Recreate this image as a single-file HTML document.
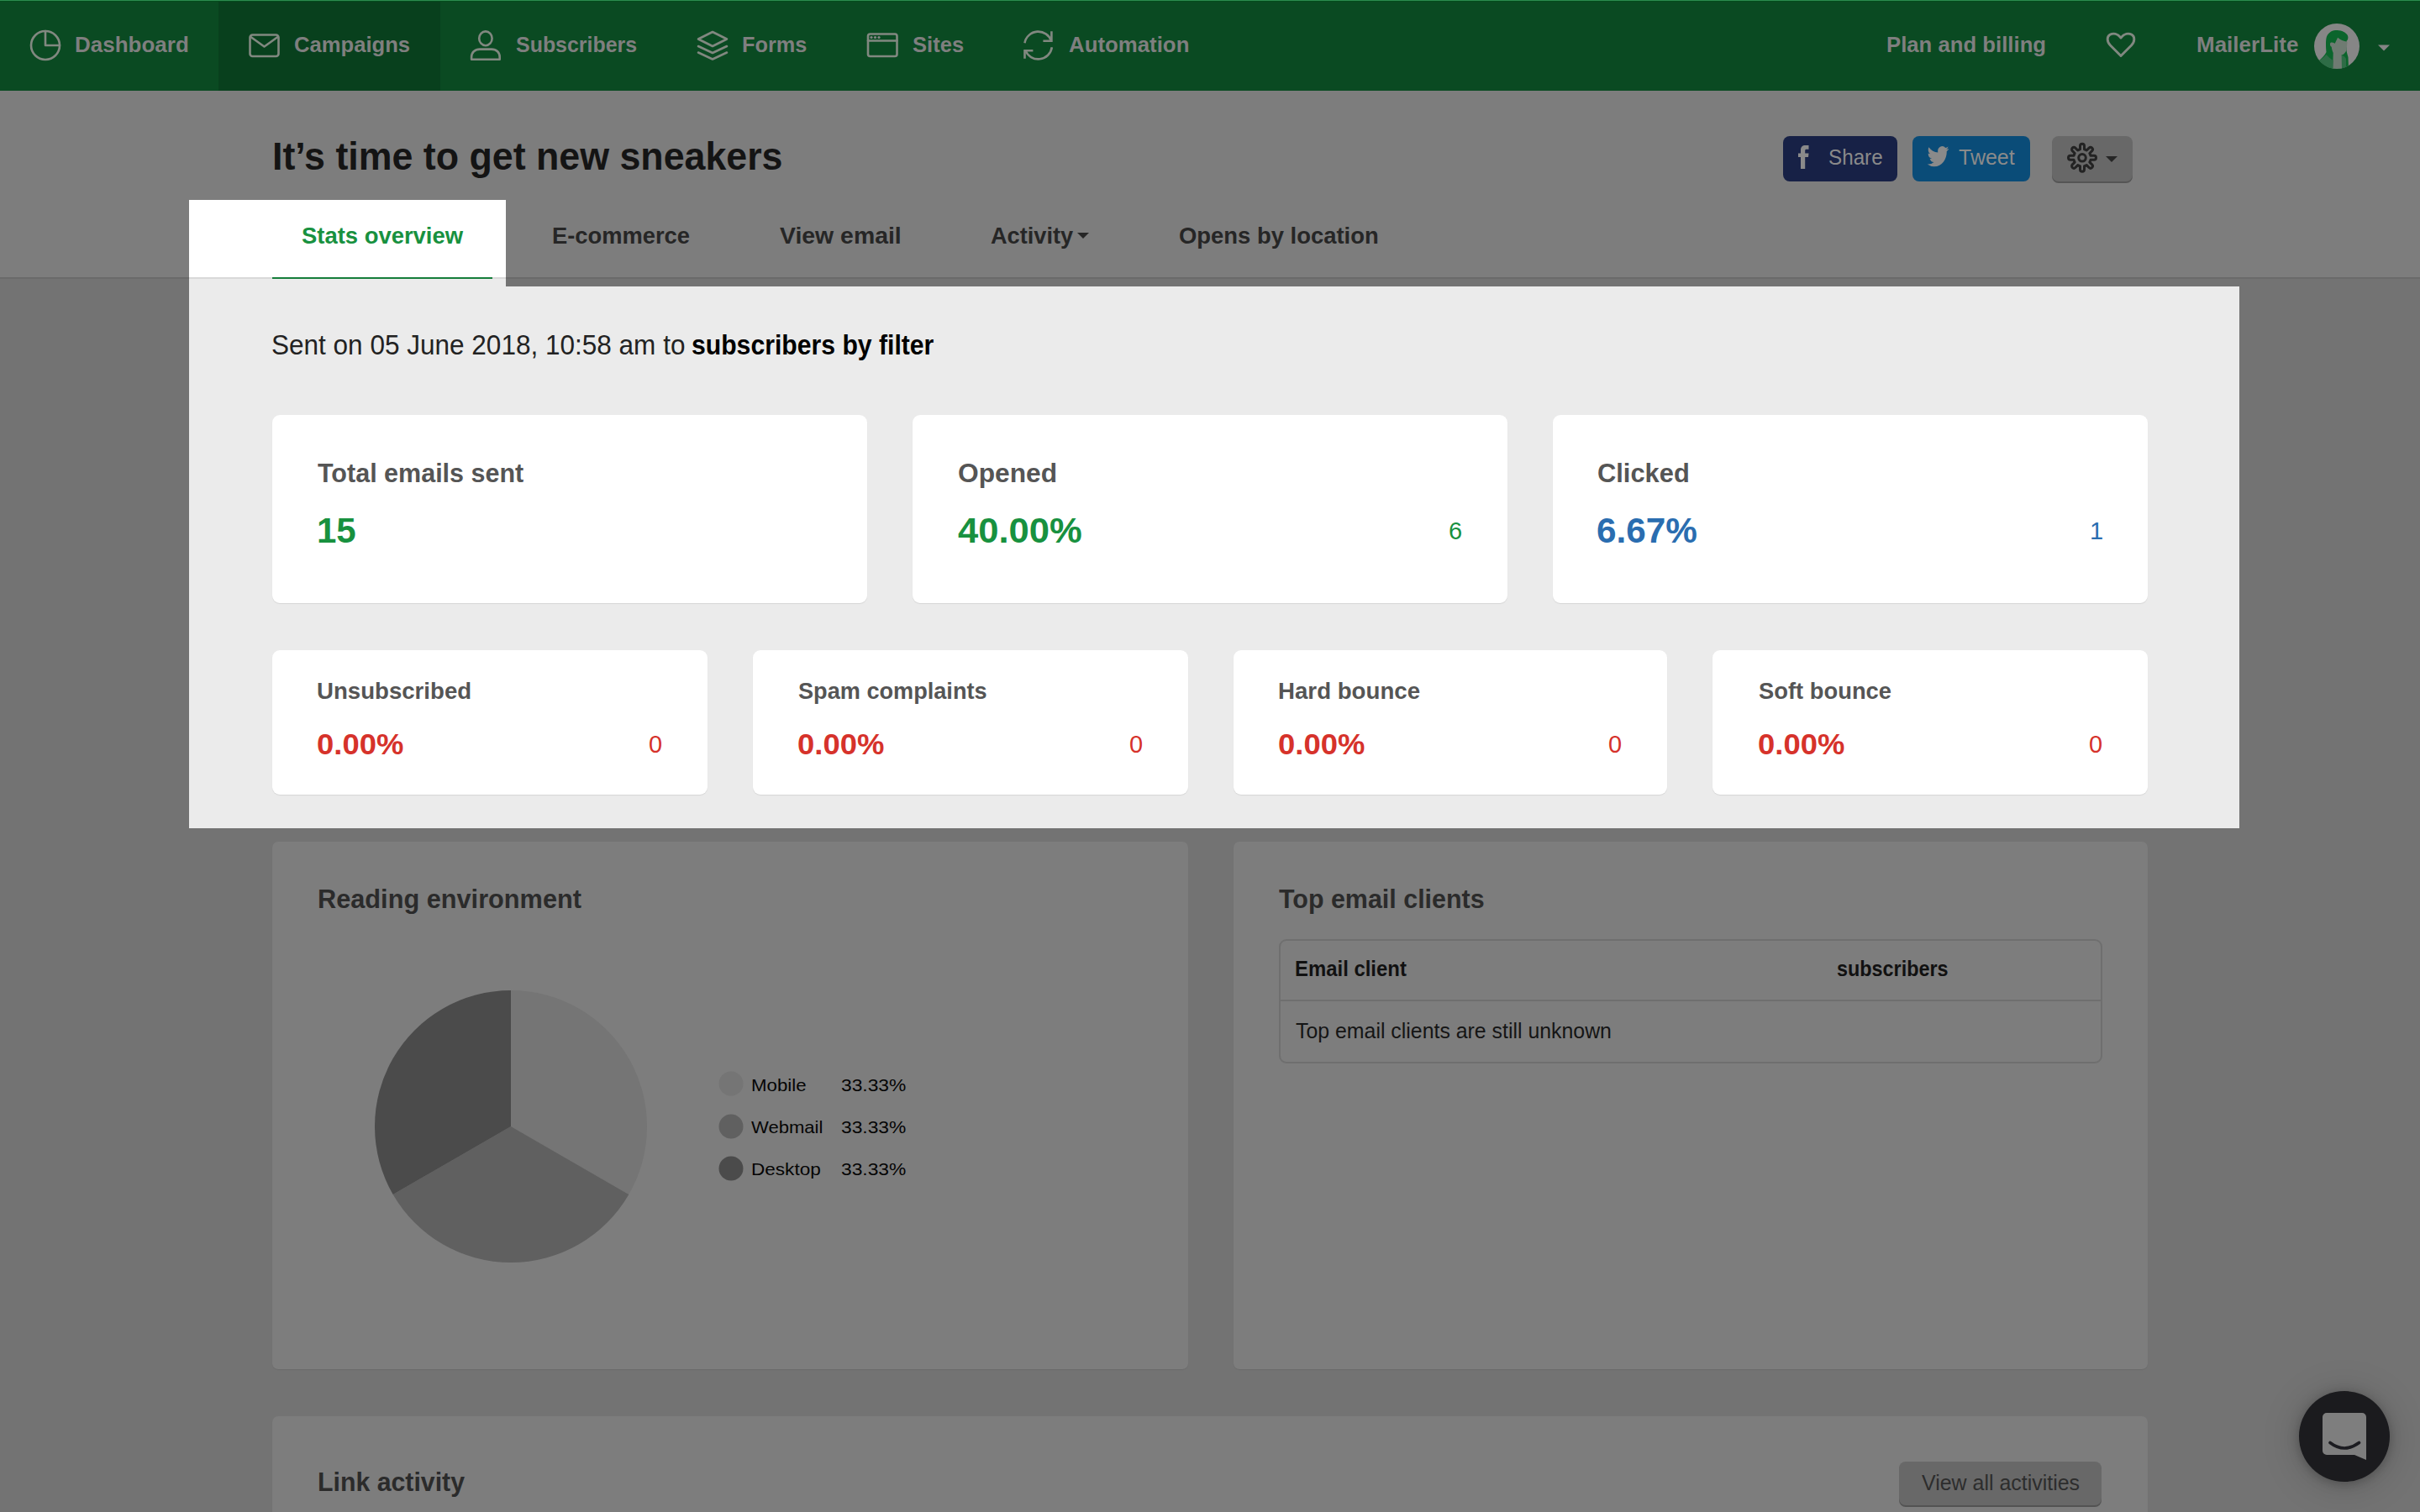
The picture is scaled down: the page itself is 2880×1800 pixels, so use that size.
<!DOCTYPE html>
<html><head><meta charset="utf-8"><title>MailerLite</title>
<style>
html,body{margin:0;padding:0;}
html{overflow:hidden;background:#737373;}
body{width:2880px;height:1800px;overflow:hidden;position:relative;background:#737373;font-family:"Liberation Sans",sans-serif;}
.abs{position:absolute;}
.tx{position:absolute;white-space:nowrap;font-family:"Liberation Sans",sans-serif;}
.card{position:absolute;background:#fff;border-radius:9px;box-shadow:0 1px 1px rgba(0,0,0,0.09);}
.dcard{position:absolute;background:#7d7d7d;border-radius:7px;box-shadow:0 1px 1px rgba(0,0,0,0.07);}
svg{position:absolute;overflow:visible;}

</style></head>
<body>
<!-- NAV -->
<div class="abs" style="left:0;top:0;width:2880px;height:108px;background:#0a4a22;"></div>
<div class="abs" style="left:260px;top:0;width:264px;height:108px;background:#08401d;"></div>
<div class="abs" style="left:0;top:0;width:2880px;height:1px;background:#2c8c50;"></div>
<div class="abs" style="left:0;top:1px;width:2880px;height:1px;background:#034d1c;"></div>
<!-- nav icons -->
<svg style="left:0;top:0" width="2880" height="108" fill="none" stroke="#818880" stroke-width="2.6" stroke-linejoin="round" stroke-linecap="round">
  <!-- dashboard -->
  <circle cx="54" cy="54" r="17"/>
  <path d="M54 37 V54 H71"/>
  <!-- campaigns -->
  <rect x="297.5" y="41.5" width="34" height="25.5" rx="3"/>
  <path d="M298.5 44 L314.5 55.5 L330.5 44"/>
  <!-- subscribers -->
  <ellipse cx="577.9" cy="45.8" rx="7.7" ry="8.4"/>
  <path d="M561.1 70.7 V68 C561.1 62.5 565 58.6 571 58.6 H585 C591 58.6 594.7 62.5 594.7 68 V70.7 Z"/>
  <!-- forms -->
  <path d="M848 38 L865 46.5 L848 55 L831 46.5 Z"/>
  <path d="M831 55 L848 63 L865 55"/>
  <path d="M831 62.5 L848 70.5 L865 62.5"/>
  <!-- sites -->
  <rect x="1033" y="40.5" width="34.5" height="26.5" rx="2.5"/>
  <path d="M1033 48.5 H1067.5"/>
  <!-- automation -->
  <path d="M1219.45 51.15 A16.4 16.4 0 0 1 1251.15 48.8" stroke-linecap="butt"/>
  <path d="M1251.4 37.3 V48.7 H1241.4" stroke-linecap="butt" stroke-linejoin="miter"/>
  <path d="M1251.84 56.28 A16.4 16.4 0 0 1 1220.29 59.88" stroke-linecap="butt"/>
  <path d="M1219.5 69.7 V60.2 H1229.4" stroke-linecap="butt" stroke-linejoin="miter"/>
  <!-- heart -->
  <path stroke-width="2.9" d="M2524 66.5 L2511.5 54 C2507 49.5 2507.3 43.5 2511 41.3 C2515 39 2520 40 2524 45 C2528 40 2533 39 2537 41.3 C2540.7 43.5 2541 49.5 2536.5 54 Z"/>
</svg>
<svg style="left:0;top:0" width="2880" height="108" fill="#858585">
  <circle cx="1037" cy="44.5" r="1.6"/><circle cx="1041.5" cy="44.5" r="1.6"/><circle cx="1046" cy="44.5" r="1.6"/>
  <path d="M2830 53.5 H2844 L2837 60.5 Z"/>
</svg>
<!-- avatar -->
<svg style="left:2754px;top:28px" width="54" height="54" viewBox="0 0 54 54">
  <defs><clipPath id="avc"><circle cx="27" cy="27" r="27"/></clipPath></defs>
  <g clip-path="url(#avc)">
    <rect width="54" height="54" fill="#868686"/>
    <path d="M5 45 C9 41 13 38 14.5 34 C14 28 13.5 20 15 15.5 C17.5 9.5 22.5 7.8 27.6 7.9 C33 8 37.5 10.5 39.5 13.5 C41 16 40.5 19.5 38.6 20.8 L38.6 31.7 C38.6 34 39.5 36 40.5 40 L41 54 L10 54 Z" fill="#0b652c"/>
    <path d="M28.1 16.8 C31 19.5 35 20.8 39.5 21.7 L38.6 31.7 C37 35 35 37 32.6 37.6 L34 41 L33 54 L22.2 54 L22.7 35.1 C21.5 32 21 30 20.7 27.7 C18.5 27 18.8 22.8 19.7 22.7 C21.5 22.3 23 23 24.7 23.7 Z" fill="#6f7b72"/>
    <path d="M5 45 C9 42 12 40 14.5 37 C17 40 20 42 22.5 44 L22.2 54 L5 54 Z" fill="#2e6c46"/>
    <path d="M32.6 37.6 C35 38.5 37 40 38 42 L38 54 L33 54 Z" fill="#2e6c46"/>
  </g>
</svg>

<!-- HEADER -->
<div class="abs" style="left:0;top:108px;width:2880px;height:222px;background:#7d7d7d;"></div>
<div class="abs" style="left:0;top:330px;width:2880px;height:2px;background:#6a6a6a;"></div>
<!-- share buttons -->
<div class="abs" style="left:2122px;top:162px;width:136px;height:54px;background:#172146;border-radius:8px;"></div>
<div class="abs" style="left:2276px;top:162px;width:140px;height:54px;background:#0a4c78;border-radius:8px;"></div>
<div class="abs" style="left:2442px;top:162px;width:96px;height:54px;background:#686868;border-radius:8px;box-shadow:0 2px 0 #555555;"></div>
<svg style="left:0;top:0" width="2880" height="300">
  <!-- fb f -->
  <path d="M2143 201 V187 H2140 V182.6 H2143 V178.5 C2143 175 2145 173 2148.5 173 H2152.5 V177.8 H2149.8 C2148.6 177.8 2148.2 178.3 2148.2 179.5 V182.6 H2152.5 L2152 187 H2148.2 V201 Z" fill="#8a8a8a"/>
  <!-- twitter bird -->
  <g transform="translate(2293.7 171.3) scale(1.07 1.24)"><path d="M23.953 4.57a10 10 0 01-2.825.775 4.958 4.958 0 002.163-2.723c-.951.555-2.005.959-3.127 1.184a4.92 4.92 0 00-8.384 4.482C7.690 8.095 4.067 6.130 1.640 3.162a4.822 4.822 0 00-.666 2.475c0 1.710.870 3.213 2.188 4.096a4.904 4.904 0 01-2.228-.616v.06a4.923 4.923 0 003.946 4.827 4.996 4.996 0 01-2.212.085 4.936 4.936 0 004.604 3.417 9.867 9.867 0 01-6.102 2.105c-.390 0-.779-.023-1.170-.067a13.995 13.995 0 007.557 2.209c9.053 0 13.998-7.496 13.998-13.985 0-.210 0-.420-.015-.630A9.935 9.935 0 0024 4.590z" fill="#8a8a8a"/></g>
  <!-- gear -->
  <g transform="translate(2478 187.8)" fill="none" stroke="#232323" stroke-width="3" stroke-linejoin="round">
    <path d="M-2.50 -9.99 L-2.50 -14.00 A2.5 2.5 0 0 1 2.50 -14.00 L2.50 -9.99 A10.3 10.3 0 0 1 5.30 -8.83 L8.13 -11.67 A2.5 2.5 0 0 1 11.67 -8.13 L8.83 -5.30 A10.3 10.3 0 0 1 9.99 -2.50 L14.00 -2.50 A2.5 2.5 0 0 1 14.00 2.50 L9.99 2.50 A10.3 10.3 0 0 1 8.83 5.30 L11.67 8.13 A2.5 2.5 0 0 1 8.13 11.67 L5.30 8.83 A10.3 10.3 0 0 1 2.50 9.99 L2.50 14.00 A2.5 2.5 0 0 1 -2.50 14.00 L-2.50 9.99 A10.3 10.3 0 0 1 -5.30 8.83 L-8.13 11.67 A2.5 2.5 0 0 1 -11.67 8.13 L-8.83 5.30 A10.3 10.3 0 0 1 -9.99 2.50 L-14.00 2.50 A2.5 2.5 0 0 1 -14.00 -2.50 L-9.99 -2.50 A10.3 10.3 0 0 1 -8.83 -5.30 L-11.67 -8.13 A2.5 2.5 0 0 1 -8.13 -11.67 L-5.30 -8.83 A10.3 10.3 0 0 1 -2.50 -9.99 Z"/>
    <circle r="4.3"/>
  </g>
  <path d="M2506 186 H2520 L2513 193 Z" fill="#262626"/>
  <!-- activity caret -->
  <path d="M1282 277 H1296 L1289 284 Z" fill="#262626"/>
</svg>

<!-- HIGHLIGHT -->
<div class="abs" style="left:225px;top:238px;width:377px;height:92px;background:#fff;"></div>
<div class="abs" style="left:225px;top:330px;width:377px;height:2px;background:#d9d9d9;"></div>
<div class="abs" style="left:324px;top:330px;width:262px;height:2px;background:#167d3b;"></div>
<div class="abs" style="left:225px;top:332px;width:377px;height:9px;background:#ebebeb;"></div>
<div class="abs" style="left:225px;top:341px;width:2440px;height:645px;background:#ebebeb;"></div>

<!-- stat cards -->
<div class="card" style="left:324px;top:494px;width:708px;height:224px;"></div>
<div class="card" style="left:1086px;top:494px;width:708px;height:224px;"></div>
<div class="card" style="left:1848px;top:494px;width:708px;height:224px;"></div>
<div class="card" style="left:324px;top:774px;width:518px;height:172px;"></div>
<div class="card" style="left:896px;top:774px;width:518px;height:172px;"></div>
<div class="card" style="left:1468px;top:774px;width:516px;height:172px;"></div>
<div class="card" style="left:2038px;top:774px;width:518px;height:172px;"></div>

<!-- LOWER dim panels -->
<div class="dcard" style="left:324px;top:1002px;width:1090px;height:628px;"></div>
<div class="dcard" style="left:1468px;top:1002px;width:1088px;height:628px;"></div>
<div class="dcard" style="left:324px;top:1686px;width:2232px;height:200px;"></div>
<!-- pie -->
<svg style="left:0;top:0" width="2880" height="1800">
  <path d="M608 1341 L608 1179 A162 162 0 0 1 748.3 1422 Z" fill="#757575"/>
  <path d="M608 1341 L748.3 1422 A162 162 0 0 1 467.7 1422 Z" fill="#606060"/>
  <path d="M608 1341 L467.7 1422 A162 162 0 0 1 608 1179 Z" fill="#4b4b4b"/>
  <circle cx="870" cy="1290" r="14.5" fill="#757575"/>
  <circle cx="870" cy="1341" r="14.5" fill="#606060"/>
  <circle cx="870" cy="1391" r="14.5" fill="#4b4b4b"/>
</svg>
<!-- table -->
<div class="abs" style="left:1522px;top:1118px;width:976px;height:144px;border:2px solid #6f6f6f;border-radius:9px;"></div>
<div class="abs" style="left:1524px;top:1190px;width:976px;height:2px;background:#6f6f6f;"></div>
<!-- view all button -->
<div class="abs" style="left:2260px;top:1740px;width:241px;height:52px;background:#686868;border-radius:8px;box-shadow:0 2px 0 #535353;"></div>
<!-- chat -->
<div class="abs" style="left:2736px;top:1656px;width:108px;height:108px;border-radius:50%;background:#1b1b1e;box-shadow:0 2px 14px rgba(0,0,0,0.26), 0 4px 48px rgba(0,0,0,0.16);"></div>
<svg style="left:0;top:0" width="2880" height="1800">
  <path d="M2769 1682 H2811 A5 5 0 0 1 2816 1687 V1738 L2802 1732 H2769 A5 5 0 0 1 2764 1727 V1687 A5 5 0 0 1 2769 1682 Z" fill="#7e7e7e"/>
  <path d="M2773 1717.5 Q2790 1730.5 2807.5 1717.5" stroke="#1c1c21" stroke-width="3.6" fill="none" stroke-linecap="round"/>
</svg>

<div class="tx" id="t0" style="left:89.0px;transform-origin:0 0;top:39.9px;font-size:26px;line-height:26px;font-weight:700;color:#7f7f7f;">Dashboard</div>
<div class="tx" id="t1" style="left:350.0px;transform-origin:0 0;top:39.9px;font-size:26px;line-height:26px;font-weight:700;color:#7f7f7f;transform:scaleX(0.9855);">Campaigns</div>
<div class="tx" id="t2" style="left:614.0px;transform-origin:0 0;top:39.9px;font-size:26px;line-height:26px;font-weight:700;color:#7f7f7f;transform:scaleX(0.9595);">Subscribers</div>
<div class="tx" id="t3" style="left:883.1px;transform-origin:0 0;top:39.9px;font-size:26px;line-height:26px;font-weight:700;color:#7f7f7f;transform:scaleX(0.9740);">Forms</div>
<div class="tx" id="t4" style="left:1086.0px;transform-origin:0 0;top:39.9px;font-size:26px;line-height:26px;font-weight:700;color:#7f7f7f;transform:scaleX(0.9833);">Sites</div>
<div class="tx" id="t5" style="left:1272.0px;transform-origin:0 0;top:39.9px;font-size:26px;line-height:26px;font-weight:700;color:#7f7f7f;transform:scaleX(0.9930);">Automation</div>
<div class="tx" id="t6" style="left:2245.0px;transform-origin:0 0;top:39.9px;font-size:26px;line-height:26px;font-weight:700;color:#7f7f7f;transform:scaleX(0.9894);">Plan and billing</div>
<div class="tx" id="t7" style="left:2614.0px;transform-origin:0 0;top:39.9px;font-size:26px;line-height:26px;font-weight:700;color:#7f7f7f;">MailerLite</div>
<div class="tx" id="t8" style="left:324.1px;transform-origin:0 0;top:162.9px;font-size:46px;line-height:46px;font-weight:700;color:#141414;transform:scaleX(0.9726);">It’s time to get new sneakers</div>
<div class="tx" id="t9" style="left:2176.0px;transform-origin:0 0;top:174.8px;font-size:25px;line-height:25px;font-weight:400;color:#8a8a8a;transform:scaleX(0.9692);">Share</div>
<div class="tx" id="t10" style="left:2331.0px;transform-origin:0 0;top:174.8px;font-size:25px;line-height:25px;font-weight:400;color:#8a8a8a;">Tweet</div>
<div class="tx" id="t11" style="left:359.0px;transform-origin:0 0;top:267.2px;font-size:28px;line-height:28px;font-weight:700;color:#18913f;transform:scaleX(0.9795);">Stats overview</div>
<div class="tx" id="t12" style="left:657.0px;transform-origin:0 0;top:267.2px;font-size:28px;line-height:28px;font-weight:700;color:#262626;transform:scaleX(0.9758);">E-commerce</div>
<div class="tx" id="t13" style="left:928.0px;transform-origin:0 0;top:267.2px;font-size:28px;line-height:28px;font-weight:700;color:#262626;transform:scaleX(1.0142);">View email</div>
<div class="tx" id="t14" style="left:1179.0px;transform-origin:0 0;top:267.2px;font-size:28px;line-height:28px;font-weight:700;color:#262626;transform:scaleX(0.9700);">Activity</div>
<div class="tx" id="t15" style="left:1403.0px;transform-origin:0 0;top:267.2px;font-size:28px;line-height:28px;font-weight:700;color:#262626;transform:scaleX(0.9792);">Opens by location</div>
<div class="tx" id="t16" style="left:322.6px;transform-origin:0 0;top:393.9px;font-size:33px;line-height:33px;font-weight:400;color:#222;transform:scaleX(0.9551);">Sent on 05 June 2018, 10:58 am to</div>
<div class="tx" id="t17" style="left:823.1px;transform-origin:0 0;top:393.9px;font-size:33px;line-height:33px;font-weight:700;color:#000;transform:scaleX(0.9140);">subscribers by filter</div>
<div class="tx" id="t18" style="left:378.0px;transform-origin:0 0;top:546.8px;font-size:32px;line-height:32px;font-weight:700;color:#555555;transform:scaleX(0.9533);">Total emails sent</div>
<div class="tx" id="t19" style="left:1140.0px;transform-origin:0 0;top:546.8px;font-size:32px;line-height:32px;font-weight:700;color:#555555;transform:scaleX(0.9914);">Opened</div>
<div class="tx" id="t20" style="left:1901.0px;transform-origin:0 0;top:546.8px;font-size:32px;line-height:32px;font-weight:700;color:#555555;transform:scaleX(0.9640);">Clicked</div>
<div class="tx" id="t21" style="left:377.1px;transform-origin:0 0;top:609.5px;font-size:43px;line-height:43px;font-weight:700;color:#18913f;transform:scaleX(0.9773);">15</div>
<div class="tx" id="t22" style="left:1140.0px;transform-origin:0 0;top:609.5px;font-size:43px;line-height:43px;font-weight:700;color:#18913f;transform:scaleX(1.0139);">40.00%</div>
<div class="tx" id="t23" style="left:1900.0px;transform-origin:0 0;top:609.5px;font-size:43px;line-height:43px;font-weight:700;color:#2a6db0;transform:scaleX(0.9832);">6.67%</div>
<div class="tx" id="t24" style="left:1724px;transform-origin:0 0;top:618.1px;font-size:29px;line-height:29px;font-weight:400;color:#18913f;">6</div>
<div class="tx" id="t25" style="left:2487px;transform-origin:0 0;top:618.1px;font-size:29px;line-height:29px;font-weight:400;color:#2a6db0;">1</div>
<div class="tx" id="t26" style="left:377.0px;transform-origin:0 0;top:810.0px;font-size:27px;line-height:27px;font-weight:700;color:#555555;transform:scaleX(1.0227);">Unsubscribed</div>
<div class="tx" id="t27" style="left:377.0px;transform-origin:0 0;top:868.2px;font-size:35px;line-height:35px;font-weight:700;color:#d6322b;transform:scaleX(1.0412);">0.00%</div>
<div class="tx" id="t28" style="left:950.0px;transform-origin:0 0;top:810.0px;font-size:27px;line-height:27px;font-weight:700;color:#555555;transform:scaleX(1.0045);">Spam complaints</div>
<div class="tx" id="t29" style="left:949.0px;transform-origin:0 0;top:868.2px;font-size:35px;line-height:35px;font-weight:700;color:#d6322b;transform:scaleX(1.0412);">0.00%</div>
<div class="tx" id="t30" style="left:1521.0px;transform-origin:0 0;top:810.0px;font-size:27px;line-height:27px;font-weight:700;color:#555555;transform:scaleX(1.0247);">Hard bounce</div>
<div class="tx" id="t31" style="left:1521.0px;transform-origin:0 0;top:868.2px;font-size:35px;line-height:35px;font-weight:700;color:#d6322b;transform:scaleX(1.0412);">0.00%</div>
<div class="tx" id="t32" style="left:2093.0px;transform-origin:0 0;top:810.0px;font-size:27px;line-height:27px;font-weight:700;color:#555555;transform:scaleX(1.0130);">Soft bounce</div>
<div class="tx" id="t33" style="left:2092.0px;transform-origin:0 0;top:868.2px;font-size:35px;line-height:35px;font-weight:700;color:#d6322b;transform:scaleX(1.0412);">0.00%</div>
<div class="tx" id="t34" style="left:772px;transform-origin:0 0;top:872.0px;font-size:29px;line-height:29px;font-weight:400;color:#d6322b;">0</div>
<div class="tx" id="t35" style="left:1344px;transform-origin:0 0;top:872.0px;font-size:29px;line-height:29px;font-weight:400;color:#d6322b;">0</div>
<div class="tx" id="t36" style="left:1914px;transform-origin:0 0;top:872.0px;font-size:29px;line-height:29px;font-weight:400;color:#d6322b;">0</div>
<div class="tx" id="t37" style="left:2486px;transform-origin:0 0;top:872.0px;font-size:29px;line-height:29px;font-weight:400;color:#d6322b;">0</div>
<div class="tx" id="t38" style="left:378.1px;transform-origin:0 0;top:1055.2px;font-size:31.5px;line-height:31.5px;font-weight:700;color:#2b2b2b;transform:scaleX(0.9750);">Reading environment</div>
<div class="tx" id="t39" style="left:1521.6px;transform-origin:0 0;top:1055.2px;font-size:31.5px;line-height:31.5px;font-weight:700;color:#2b2b2b;transform:scaleX(0.9659);">Top email clients</div>
<div class="tx" id="t40" style="left:1540.5px;transform-origin:0 0;top:1140.8px;font-size:25px;line-height:25px;font-weight:700;color:#111;transform:scaleX(0.9562);">Email client</div>
<div class="tx" id="t41" style="left:2186.1px;transform-origin:0 0;top:1140.8px;font-size:25px;line-height:25px;font-weight:700;color:#111;transform:scaleX(0.9357);">subscribers</div>
<div class="tx" id="t42" style="left:1541.7px;transform-origin:0 0;top:1214.8px;font-size:25px;line-height:25px;font-weight:400;color:#151515;transform:scaleX(0.9947);">Top email clients are still unknown</div>
<div class="tx" id="t43" style="left:893.9px;transform-origin:0 0;top:1280.7px;font-size:21px;line-height:21px;font-weight:400;color:#050505;transform:scaleX(1.0593);">Mobile</div>
<div class="tx" id="t44" style="left:1000.9px;transform-origin:0 0;top:1280.7px;font-size:21px;line-height:21px;font-weight:400;color:#050505;transform:scaleX(1.0857);">33.33%</div>
<div class="tx" id="t45" style="left:894.0px;transform-origin:0 0;top:1331.0px;font-size:21px;line-height:21px;font-weight:400;color:#050505;transform:scaleX(1.0500);">Webmail</div>
<div class="tx" id="t46" style="left:1000.9px;transform-origin:0 0;top:1331.0px;font-size:21px;line-height:21px;font-weight:400;color:#050505;transform:scaleX(1.0857);">33.33%</div>
<div class="tx" id="t47" style="left:893.9px;transform-origin:0 0;top:1381.2px;font-size:21px;line-height:21px;font-weight:400;color:#050505;transform:scaleX(1.0743);">Desktop</div>
<div class="tx" id="t48" style="left:1000.9px;transform-origin:0 0;top:1381.2px;font-size:21px;line-height:21px;font-weight:400;color:#050505;transform:scaleX(1.0857);">33.33%</div>
<div class="tx" id="t49" style="left:378.1px;transform-origin:0 0;top:1749.2px;font-size:31.5px;line-height:31.5px;font-weight:700;color:#2b2b2b;transform:scaleX(0.9611);">Link activity</div>
<div class="tx" id="t50" style="left:2287.0px;transform-origin:0 0;top:1751.9px;font-size:26px;line-height:26px;font-weight:400;color:#2d2d2d;transform:scaleX(0.9590);">View all activities</div>
<script>(function(){var s=window.innerWidth/2880;if(Math.abs(s-1)>0.001){var b=document.body;b.style.transformOrigin='0 0';b.style.transform='scale('+s+')';}})();</script>
</body></html>
